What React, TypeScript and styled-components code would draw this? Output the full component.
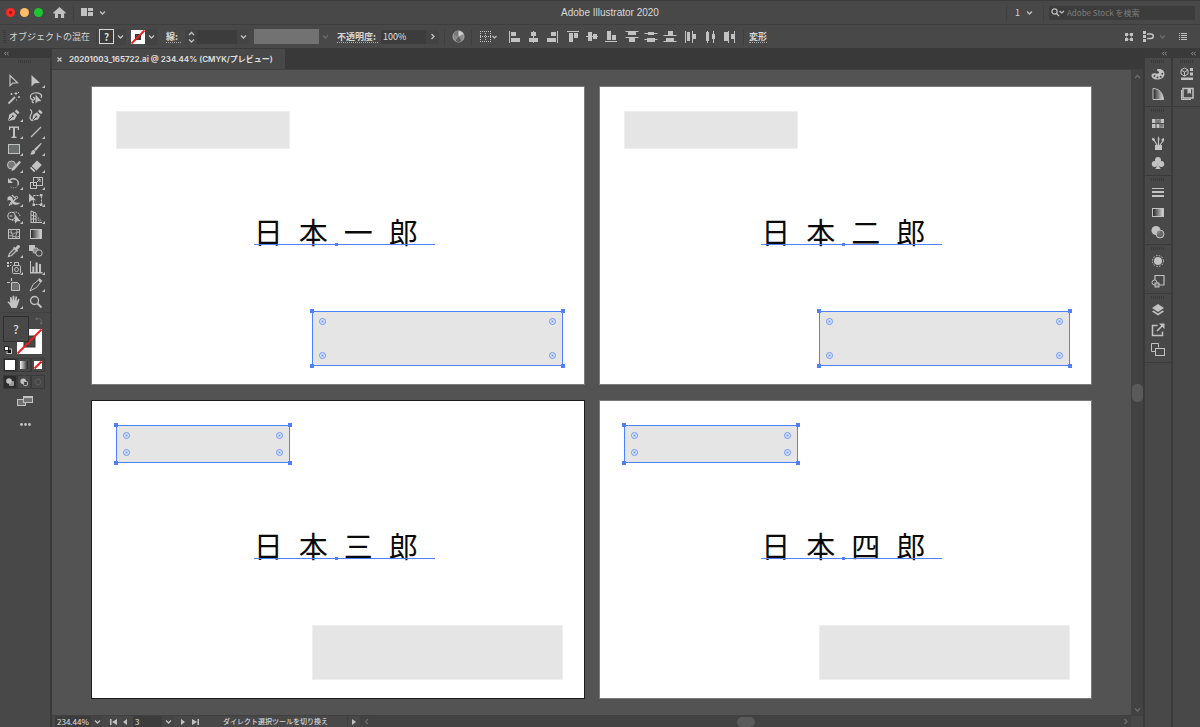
import React from "react";
import styled, { createGlobalStyle, css } from "styled-components";

const color = {
  panel: "#484848",
  edge: "#3a3a3a",
  tabs: "#393939",
  field: "#3c3c3c",
  track: "#424242",
  thumb: "#5a5a5a",
  canvas: "#535353",
  icon: "#c2c2c2",
  text: "#d6d6d6",
  select: "#4f80ff",
  block: "#e5e5e5",
};

const GlobalStyle = createGlobalStyle`
  *, *::before, *::after { box-sizing: border-box; }
  body {
    margin: 0;
    background: ${color.edge};
    color: ${color.text};
    font-family: "Noto Sans CJK JP", "Noto Sans", sans-serif;
    font-size: 9px;
    line-height: 12px;
  }
  button, input, select { font: inherit; color: inherit; }
`;

/* ---------- shared parts ---------- */

const Window = styled.div`
  display: flex;
  flex-direction: column;
  min-height: 100vh;
`;

const Svg = styled.svg`
  display: block;
  flex: none;
  fill: none;
  stroke: currentColor;
  overflow: visible;
`;

const IconButton = styled.button<{ $w?: number; $h?: number; $dim?: boolean; $framed?: boolean }>`
  display: flex;
  align-items: center;
  justify-content: center;
  flex: none;
  width: ${(p) => p.$w ?? 18}px;
  height: ${(p) => p.$h ?? 16}px;
  padding: 0;
  border: 0;
  background: ${(p) => (p.$framed ? "#434343" : "none")};
  color: ${(p) => (p.$dim ? "#6c6c6c" : color.icon)};
`;

const Divider = styled.span<{ $h?: number }>`
  flex: none;
  width: 1px;
  height: ${(p) => p.$h ?? 16}px;
  background: #3f3f3f;
`;

const Gap = styled.span<{ $w: number }>`
  flex: none;
  width: ${(p) => p.$w}px;
`;

const Field = styled.input<{ $w: number }>`
  flex: none;
  width: ${(p) => p.$w}px;
  height: 14px;
  padding: 0 2px;
  border: 0;
  border-radius: 0;
  background: ${color.field};
  color: #e0e0e0;
`;

const SelectBox = styled.span<{ $w: number; $h?: number }>`
  display: grid;
  grid-template-columns: 1fr 12px;
  align-items: center;
  justify-items: center;
  flex: none;
  width: ${(p) => p.$w}px;
  height: ${(p) => p.$h ?? 14}px;
  color: ${color.icon};
  select {
    grid-area: 1 / 1 / 2 / 3;
    width: 100%;
    height: 100%;
    padding: 0 2px;
    border: 0;
    border-radius: 0;
    appearance: none;
    color: #e0e0e0;
    background: linear-gradient(to left, #444 12px, ${color.field} 12px);
  }
  svg {
    grid-area: 1 / 2 / 2 / 3;
    pointer-events: none;
  }
`;

type Dir = "down" | "up" | "left" | "right";
const chevrons: Record<Dir, string> = {
  down: "M1 2.5 3.5 5 6 2.5",
  up: "M1 5 3.5 2.5 6 5",
  left: "M5 1 2.5 3.5 5 6",
  right: "M2.5 1 5 3.5 2.5 6",
};
const Chevron = ({ dir = "down" }: { dir?: Dir }) => (
  <Svg width="7" height="7" viewBox="0 0 7 7" strokeWidth="1.3">
    <path d={chevrons[dir]} />
  </Svg>
);

const Stepper = styled.span`
  display: flex;
  flex-direction: column;
  flex: none;
`;

/* ---------- title bar ---------- */

const TitleBar = styled.header`
  display: grid;
  grid-template-columns: 1fr auto 1fr;
  align-items: center;
  height: 25px;
  border-top: 1px solid #3a3a3a;
  border-bottom: 1px solid #3e3e3e;
  background: ${color.panel};
`;

const TitleSide = styled.div<{ $end?: boolean }>`
  display: flex;
  align-items: center;
  justify-content: ${(p) => (p.$end ? "flex-end" : "flex-start")};
  padding: 0 5px 0 6px;
`;

const Lights = styled.div`
  display: flex;
  gap: 5px;
  margin-right: 8px;
`;

const Light = styled.button<{ $c: string; $mark?: boolean }>`
  width: 9px;
  height: 9px;
  padding: 0;
  border: 0;
  border-radius: 50%;
  background: ${(p) => p.$c};
  ${(p) => p.$mark && css`background: radial-gradient(#a3120e 1px, ${p.$c} 2px);`}
`;

const Title = styled.h1`
  margin: 0;
  padding-left: 20px;
  font: 400 10px/14px "Liberation Sans", Arial, sans-serif;
  color: #d8d8d8;
`;

const Search = styled.label`
  display: flex;
  align-items: center;
  width: 146px;
  height: 14px;
  padding-left: 2px;
  background: ${color.field};
  color: ${color.icon};
  input {
    flex: 1;
    min-width: 0;
    height: 14px;
    padding: 0 0 0 2px;
    border: 0;
    background: none;
    outline: 0;
    font-size: 8px;
  }
  input::placeholder { color: #7c7c7c; }
`;

const TopBar = () => (
  <TitleBar>
    <TitleSide>
      <Lights>
        <Light $c="#fb2a22" $mark aria-label="Close" />
        <Light $c="#fdbc68" aria-label="Minimize" />
        <Light $c="#1fc431" aria-label="Zoom" />
      </Lights>
      <IconButton $w={17} aria-label="Home">
        <Svg width="13" height="11" viewBox="0 0 14 12">
          <path d="M7 0 14 6.3 13 7.3 12 6.5V12H8.6V7.6H5.4V12H2V6.5L1 7.3 0 6.3z" fill="currentColor" stroke="none" />
        </Svg>
      </IconButton>
      <Gap $w={5} />
      <Divider />
      <Gap $w={6} />
      <IconButton $w={14} aria-label="Workspace layout">
        <Svg width="13" height="9" viewBox="0 0 13 9">
          <path d="M0 0h6v8H0zM7 0h5v3H7zM7 4h5v4H7z" fill="currentColor" stroke="none" />
        </Svg>
      </IconButton>
      <IconButton $w={16} aria-label="Workspace menu"><Chevron /></IconButton>
    </TitleSide>
    <Title>Adobe Illustrator 2020</Title>
    <TitleSide $end>
      <Divider />
      <Gap $w={8} />
      <span>1</span>
      <IconButton $w={18} aria-label="Workspace"><Chevron /></IconButton>
      <Gap $w={5} />
      <Divider />
      <Gap $w={5} />
      <Search>
        <Svg width="14" height="9" viewBox="0 0 14 9" strokeWidth="1.2">
          <circle cx="3.5" cy="3.5" r="2.6" />
          <path d="M5.5 5.5 8 8M8.5 3 10.7 5 13 3" />
        </Svg>
        <input aria-label="Adobe Stock を検索" placeholder="Adobe Stock を検索" />
      </Search>
    </TitleSide>
  </TitleBar>
);

/* ---------- control bar ---------- */

const Bar = styled.div`
  display: flex;
  align-items: center;
  height: 24px;
  padding-left: 3px;
  border-bottom: 1px solid ${color.edge};
  background: ${color.panel};
`;

const BarGrip = styled.span`
  width: 3px;
  height: 14px;
  background: repeating-linear-gradient(#3b3b3b 0 1px, transparent 1px 2px);
`;

const BarLabel = styled.span<{ $w: number }>`
  flex: none;
  width: ${(p) => p.$w}px;
  white-space: nowrap;
`;

const LinkButton = styled.button<{ $w: number }>`
  flex: none;
  width: ${(p) => p.$w}px;
  height: 12px;
  padding: 0;
  border: 0;
  border-bottom: 1px dotted #a8a8a8;
  background: none;
  text-align: left;
  font-weight: 700;
  line-height: 11px;
  white-space: nowrap;
`;

const FillSwatch = styled.button`
  flex: none;
  width: 15px;
  height: 15px;
  padding: 0;
  border: 1px solid #d8d8d8;
  background: #3c3c3c;
  font-size: 10px;
  font-weight: 700;
  line-height: 12px;
`;

const DisabledBox = styled.span`
  flex: none;
  width: 65px;
  height: 15px;
  background: #727272;
`;

const ButtonGroup = styled.div`
  display: flex;
  margin-right: 2px;
`;

const Push = styled.span`
  flex: 1;
`;

const alignShapes: { name: string; line: string; solid: string }[][] = [
  [
    { name: "Align left", line: "M2.5 1v12", solid: "M4 2h5v4H4zM4 8h9v4H4z" },
    { name: "Align center", line: "M7.5 1v12", solid: "M5 2h5v4H5zM3 8h9v4H3z" },
    { name: "Align right", line: "M12.5 1v12", solid: "M6 2h5v4H6zM2 8h9v4H2z" },
  ],
  [
    { name: "Align top", line: "M1 1.5h12", solid: "M3 3h4v9H3zM8 3h4v5H8z" },
    { name: "Align middle", line: "M1 6.5h12", solid: "M3 2h4v9H3zM8 4h4v5H8z" },
    { name: "Align bottom", line: "M1 11.5h12", solid: "M3 1h4v9H3zM8 5h4v5H8z" },
  ],
  [
    { name: "Distribute top", line: "M.5 1.5h13M.5 7.5h13", solid: "M3 2h8v3H3zM4 8h6v4H4z" },
    { name: "Distribute vertical center", line: "M.5 3.5h13M.5 9.5h13", solid: "M4 2h6v3H4zM3 8h8v4H3z" },
    { name: "Distribute bottom", line: "M.5 5.5h13M.5 11.5h13", solid: "M5 1h5v4H5zM3 8h8v3H3z" },
  ],
  [
    { name: "Distribute left", line: "M1.5 1v12M8.5 1v12", solid: "M3 2h3v9H3zM9 4h3v5H9z" },
    { name: "Distribute horizontal center", line: "M4.5 1v12M10.5 1v12", solid: "M3 2h3v9H3zM9 4h3v5H9z" },
    { name: "Distribute right", line: "M6.5 1v12M12.5 1v12", solid: "M2 2h4v9H2zM9 4h3v5H9z" },
  ],
];

const StrokeNone = ({ size, hole }: { size: number; hole: number }) => (
  <Svg width={size} height={size} viewBox={`0 0 ${size} ${size}`}>
    <rect width={size} height={size} fill="#fff" stroke="none" />
    <rect x={(size - hole) / 2} y={(size - hole) / 2} width={hole} height={hole} fill={color.panel} stroke="#333" strokeWidth="1" />
    <path d={`M.5 ${size - 0.5}L${size - 0.5} .5`} stroke="#f01818" strokeWidth="1.8" />
  </Svg>
);

const ControlBar = () => (
  <Bar>
    <BarGrip />
    <Gap $w={3} />
    <BarLabel $w={87}>オブジェクトの混在</BarLabel>
    <Divider />
    <Gap $w={2} />
    <FillSwatch aria-label="Fill">?</FillSwatch>
    <IconButton $w={12} $framed aria-label="Fill menu"><Chevron /></IconButton>
    <Gap $w={5} />
    <IconButton $w={14} aria-label="Stroke"><StrokeNone size={14} hole={5} /></IconButton>
    <IconButton $w={12} $framed aria-label="Stroke menu"><Chevron /></IconButton>
    <Gap $w={9} />
    <LinkButton $w={15}>線:</LinkButton>
    <Gap $w={4} />
    <Stepper>
      <IconButton $w={12} $h={7} $framed aria-label="Increase"><Chevron dir="up" /></IconButton>
      <IconButton $w={12} $h={7} $framed aria-label="Decrease"><Chevron /></IconButton>
    </Stepper>
    <SelectBox $w={52}>
      <select aria-label="線幅"><option></option></select>
      <Chevron />
    </SelectBox>
    <Gap $w={5} />
    <DisabledBox />
    <IconButton $w={12} $dim disabled aria-label="Profile"><Chevron /></IconButton>
    <Gap $w={6} />
    <LinkButton $w={41}>不透明度:</LinkButton>
    <Gap $w={3} />
    <Field $w={45} aria-label="不透明度" defaultValue="100%" />
    <IconButton $w={13} $h={14} $framed aria-label="Opacity slider"><Chevron dir="right" /></IconButton>
    <Gap $w={5} />
    <Divider />
    <IconButton $w={26} aria-label="Recolor artwork">
      <Svg width="13" height="13" viewBox="0 0 13 13">
        <circle cx="6.5" cy="6.5" r="5.5" fill="#8a8a8a" stroke="#b0b0b0" />
        <path d="M6.5 6.5V1a5.5 5.5 0 0 0-5 3.5z" fill="#777" stroke="none" />
        <path d="M6.5 6.5l5-2.5a5.5 5.5 0 0 0-5-3z" fill="#cfcfcf" stroke="none" />
        <path d="M6.5 6.5l-3 4.5a5.5 5.5 0 0 0 6 0z" fill="#5c5c5c" stroke="none" />
      </Svg>
    </IconButton>
    <Divider />
    <IconButton $w={33} aria-label="Align to selection">
      <Svg width="17" height="12" viewBox="0 0 17 12">
        <path d="M0 .5h11M0 5.5h11M0 10.5h11" strokeDasharray="1 1" />
        <path d="M.5 2v8M5.5 2v8M10.5 2v8" strokeDasharray="1 1" />
        <path d="M12.5 5l2 2 2-2" strokeWidth="1.2" />
      </Svg>
    </IconButton>
    {alignShapes.map((group) => (
      <ButtonGroup key={group[0].name}>
        {group.map((shape) => (
          <IconButton $w={19} key={shape.name} aria-label={shape.name}>
            <Svg width="15" height="14" viewBox="0 0 15 14">
              <path d={shape.line} />
              <path d={shape.solid} fill="currentColor" stroke="none" />
            </Svg>
          </IconButton>
        ))}
      </ButtonGroup>
    ))}
    <Gap $w={2} />
    <Divider />
    <Gap $w={5} />
    <LinkButton $w={18}>変形</LinkButton>
    <Push />
    <IconButton $w={18} aria-label="Edit similar shapes">
      <Svg width="10" height="10" viewBox="0 0 10 10">
        <path d="M1 1h3v3H1zM6 1h3v3H6zM1 6h3v3H1zM6 6h3v3H6z" fill="currentColor" stroke="none" />
        <path d="M4.5 2.5h1M4.5 7.5h1M2.5 4.5v1M7.5 4.5v1" />
      </Svg>
    </IconButton>
    <IconButton $w={20} aria-label="Snap options">
      <Svg width="11" height="11" viewBox="0 0 11 11">
        <path d="M0 0h3v3H0zM0 4h3v3H0zM0 8h3v3H0z" fill="currentColor" stroke="none" />
        <path d="M4 3h4a2.2 2.2 0 0 1 0 4.5H4" strokeWidth="1.5" />
      </Svg>
    </IconButton>
    <IconButton $w={8} $dim aria-label="Snap menu"><Chevron /></IconButton>
    <Gap $w={7} />
    <IconButton $w={20} aria-label="Panel menu">
      <Svg width="8" height="8" viewBox="0 0 8 8">
        <path d="M0 .5h1M2 .5h6M0 2.5h1M2 2.5h6M0 4.5h1M2 4.5h6M0 6.5h1M2 6.5h6" />
      </Svg>
    </IconButton>
    <Gap $w={7} />
  </Bar>
);

/* ---------- tool panel ---------- */

const Body = styled.div`
  display: flex;
  flex: 1;
  gap: 2px;
`;

const SidePanel = styled.aside<{ $w: number }>`
  display: flex;
  flex-direction: column;
  flex: none;
  width: ${(p) => p.$w}px;
  background: ${color.panel};
`;

const CollapseStrip = styled.button<{ $end?: boolean }>`
  display: flex;
  align-items: center;
  justify-content: ${(p) => (p.$end ? "flex-end" : "flex-start")};
  height: 9px;
  padding: 0 4px;
  border: 0;
  background: ${color.edge};
  color: #a0a0a0;
`;

const Collapse = ({ end }: { end?: boolean }) => (
  <CollapseStrip $end={end} aria-label="Collapse panel">
    <Svg width="5" height="5" viewBox="0 0 6 5">
      <path d="M2.5.5.5 2.5l2 2M5.5.5l-2 2 2 2" />
    </Svg>
  </CollapseStrip>
);

const Grip = styled.span`
  align-self: center;
  width: 14px;
  height: 3px;
  margin: 2px 0 1px;
  background: repeating-linear-gradient(to right, #3a3a3a 0 1px, transparent 1px 2px);
`;

const ToolGrid = styled.div`
  display: grid;
  grid-template-columns: repeat(2, 22px);
  grid-auto-rows: 17px;
  margin: 9px 0 1px 3px;
`;

const s = { fill: "currentColor", stroke: "none" };
const dark = { stroke: color.panel, strokeWidth: 1 };

const tools: { name: string; more?: boolean; art: React.ReactNode }[] = [
  { name: "Selection", art: <path d="M3 1.5v10.2l2.8-2.6 4.700-.3z" strokeWidth="1.2" /> },
  { name: "Direct selection", more: true, art: <path d="M2.5 1v11.5l3.3-3.2 5.2-.3z" {...s} /> },
  {
    name: "Magic wand",
    art: (
      <>
        <path d="M1.5 12.5 8 6" strokeWidth="1.8" />
        <path d="M9 1v3M7.5 2.5h3M12 5v2M11 6h2M4.5 2v2M3.5 3h2M11.5 1v1M9.5 8.5v1" />
      </>
    ),
  },
  {
    name: "Lasso",
    art: (
      <>
        <path d="M4.5 9C.5 8.5 0 3 5.5 2c5-1 8.5 2 6.5 5M4.5 9C2 10 3.5 12 5 11.5M4.5 9c2-1 1-3-.5-2.5" strokeWidth="1.2" />
        <path d="M6.5 3.5v9l2.3-2.3h3.7z" {...s} />
      </>
    ),
  },
  {
    name: "Pen",
    more: true,
    art: (
      <>
        <path d="M1 13l1.3-6.5L6.7 4 10 7.3 7.5 11.7z" {...s} />
        <path d="M7.8 3.2 9.5 1.5 12.5 4.5 10.8 6.2z" {...s} />
        <path d="M1.5 12.5 5.5 8.5" {...dark} />
        <circle cx="5.8" cy="8.2" r="1" fill={color.panel} stroke="none" />
      </>
    ),
  },
  {
    name: "Curvature",
    art: (
      <>
        <path d="M3 12.8l1.3-6L8 4.3l3.3 3.3L9 11.5z" {...s} />
        <path d="M9 3.4 10.7 1.5 13.6 4.4 12 6.3z" {...s} />
        <path d="M1 1.5c3 1.5 1.5 4 .5 6s-.5 4 2 5.5" strokeWidth="1.2" />
        <path d="M4 12 7 9" {...dark} />
        <circle cx="7.3" cy="8.5" r="1" fill={color.panel} stroke="none" />
      </>
    ),
  },
  { name: "Type", more: true, art: <path d="M2 1.5h10V5h-1.2L10.5 3H8v8.5l1.5.3V13h-5v-1.2L6 11.5V3H3.5L3.2 5H2z" {...s} /> },
  { name: "Line segment", more: true, art: <path d="M2 12 12 2" strokeWidth="1.2" /> },
  { name: "Rectangle", more: true, art: <rect x="1.5" y="2.5" width="11" height="9" fill="#6a6e6d" /> },
  {
    name: "Paintbrush",
    more: true,
    art: (
      <>
        <path d="M12.8 1.5 6.8 9 5 7.3 11.8 1z" {...s} />
        <path d="M4.3 8c1.5 0 2.5 1.3 1.7 3-.8 1.5-3 1.8-5 1.3 1.5-.8 1.3-3.8 3.3-4.3z" {...s} />
      </>
    ),
  },
  {
    name: "Shaper",
    more: true,
    art: (
      <>
        <circle cx="4.5" cy="6" r="4" fill="#777" />
        <path d="M14 3.3 7.5 10.8 4.5 12.3l.8-3.3L12.3 1.8z" {...s} />
      </>
    ),
  },
  {
    name: "Eraser",
    more: true,
    art: (
      <>
        <path d="M8 1.5 12.8 6 7.5 11.5 2.7 7z" {...s} />
        <path d="M2 7.8 6.5 12l-1.5 1L1 9z" fill="#fff" stroke="none" opacity=".75" />
      </>
    ),
  },
  {
    name: "Rotate",
    more: true,
    art: (
      <>
        <path d="M3 4C7 1 12.5 4 11 9" strokeWidth="1.4" />
        <path d="M11 9c-1 3-5 4-8 1.5" strokeDasharray="1.5 1" opacity=".6" />
        <path d="M1 2v5h5z" {...s} />
      </>
    ),
  },
  {
    name: "Scale",
    more: true,
    art: (
      <>
        <rect x="4.5" y="1.5" width="9" height="8" />
        <rect x="1.5" y="6.5" width="6" height="6" />
        <path d="M7 7l4-4M8 3h3v3" />
      </>
    ),
  },
  {
    name: "Width",
    more: true,
    art: (
      <>
        <path d="M.5 4.5c3-3 5 0 5.500 2s3 4 7.5 3c-2 3-7 3-8.5.5S3 6 .5 7.5z" {...s} />
        <path d="M2 12.5 9 5.5M5 2l3 3M3 9.5l2 2" strokeWidth="1.2" />
        <circle cx="9.5" cy="4.5" r="1.2" />
      </>
    ),
  },
  {
    name: "Free transform",
    more: true,
    art: (
      <>
        <path d="M4.5 2.5h8v9h-8z" strokeDasharray="2 1" />
        <path d="M11 1h2.5v2.5H11zM11 10.5h2.5V13H11zM3.5 10.5H6V13H3.5z" {...s} />
        <path d="M0 .5v9l2.5-2.3H7z" {...s} />
      </>
    ),
  },
  {
    name: "Shape builder",
    more: true,
    art: (
      <>
        <circle cx="4.5" cy="6" r="3.8" />
        <path d="M6 2.5c4-1.5 7.5 1 7 4.5M5 10c1 .6 1.5.8 3 .8" strokeDasharray="1.5 1" />
        <path d="M2.5 6h3" />
        <path d="M8 4.5v9l2.2-2.2h3.5z" {...s} />
      </>
    ),
  },
  {
    name: "Perspective grid",
    more: true,
    art: (
      <>
        <path d="M2 1v12M2 1l5 2v10M2 5l5 1.5M2 9h5M4.5 2v11M2 12.5h11" />
        <path d="M7 4l6 8M7 7l4.5 5M9.5 8v4M7 10h5" opacity=".6" strokeDasharray="1 1" />
      </>
    ),
  },
  {
    name: "Mesh",
    art: (
      <>
        <rect x="1.5" y="2.5" width="11" height="9" />
        <path d="M1.5 6c3-3 4 2 6 .5s3-2 5-1M1.5 9.5c3-3 7 3 11-.5M5 2.5c-3 3 3 6 0 9M9 2.5c3 3-2 6 .5 9" opacity=".85" />
      </>
    ),
  },
  { name: "Gradient", art: <rect x="1.5" y="2.5" width="11" height="9" fill="url(#fade)" /> },
  {
    name: "Eyedropper",
    more: true,
    art: (
      <>
        <path d="M7.5 4.5 2.5 9.5 1.5 12.5 4.5 11.5 9.5 6.5" strokeWidth="1.2" />
        <path d="M6 4l1.2-1.2 1 1L10.5 1.3c1.5-1 3 .6 2.2 2.2L10.2 5.8l1 1L10 8z" {...s} />
      </>
    ),
  },
  {
    name: "Blend",
    art: (
      <>
        <path d="M0 1h6v6H0z" {...s} />
        <rect x="4" y="4" width="5" height="5" rx="1.5" fill="#8a8a8a" />
        <circle cx="10" cy="9" r="3.2" fill={color.panel} />
      </>
    ),
  },
  {
    name: "Symbol sprayer",
    more: true,
    art: (
      <>
        <rect x="5.5" y="4.5" width="8" height="8" rx="1" />
        <path d="M7.5 4.5v-3h4v3" />
        <circle cx="9.5" cy="8.5" r="2" />
        <path d="M0 1h2v2H0zM3 1h2v1H3zM0 4h2v2H0zM3 4h1v1H3z" {...s} />
      </>
    ),
  },
  { name: "Column graph", more: true, art: <path d="M1 0v12.5h12.5V11H12V3h-2v8H8.7V1.5H6.5V11H5.3V5.5H3.3V11H2V0z" {...s} /> },
  {
    name: "Artboard",
    art: (
      <>
        <path d="M4.5 4.5h6l2 2v6h-8z" fill="#707070" />
        <path d="M4.5 0v3M0 4.5h3" strokeWidth="1.2" />
      </>
    ),
  },
  {
    name: "Slice",
    more: true,
    art: (
      <>
        <path d="M1 13 4 6.5 9.5 2l2 2.3L7.5 9.5z" />
        <path d="M9 1.5 10.5 0l3 3-1.8 1.7z" {...s} />
      </>
    ),
  },
  {
    name: "Hand",
    more: true,
    art: <path d="M4.5 13 2.5 9.5.5 7.2c.6-1 1.6-.7 2.7.5L3 2.5c.8-.8 1.5-.5 1.7.3L5.3 6l.3-5c.6-.8 1.4-.7 1.7 0L7.5 6l1-4.3c.7-.6 1.4-.4 1.5.4L9.7 6.5l1.6-2.7c.8-.3 1.3.1 1.2.8L11 9.500 9.5 13z" {...s} />,
  },
  {
    name: "Zoom",
    art: (
      <>
        <circle cx="5.5" cy="5.5" r="4" strokeWidth="1.3" />
        <path d="M8.5 8.5 12.5 12.5" strokeWidth="2" />
      </>
    ),
  },
];

const Tool = ({ name, more, art }: (typeof tools)[number]) => (
  <IconButton $w={22} $h={17} aria-label={name}>
    <Svg width="22" height="17" viewBox="0 0 22 17">
      <g transform="translate(4 1)">{art}</g>
      {more && <path d="M20 12v3h-3z" {...s} />}
    </Svg>
  </IconButton>
);

const FillStroke = styled.div`
  position: relative;
  height: 43px;
  border-top: 1px solid #414141;
`;

const FillProxy = styled.button`
  position: absolute;
  left: 3px;
  top: 3px;
  width: 26px;
  height: 26px;
  padding: 0;
  border: 1px solid #303030;
  background: ${color.panel};
  font-size: 12px;
  font-weight: 500;
`;

const StrokeProxy = styled.button`
  position: absolute;
  left: 17px;
  top: 16px;
  padding: 0;
  border: 0;
  background: none;
`;

const SwapMark = styled.button`
  position: absolute;
  left: 35px;
  top: 4px;
  padding: 0;
  border: 0;
  background: none;
  color: #6c6c6c;
`;

const DefaultMark = styled.button`
  position: absolute;
  left: 4px;
  top: 33px;
  padding: 0;
  border: 0;
  background: none;
  color: ${color.icon};
`;

const ModeRow = styled.div`
  display: flex;
  align-self: flex-start;
  margin: 3px 0 0 3px;
`;

const Mode = styled.button<{ $active?: boolean }>`
  display: flex;
  align-items: center;
  justify-content: center;
  width: 14px;
  height: 14px;
  padding: 0;
  border: 1px solid #3a3a3a;
  background: ${(p) => (p.$active ? "#2c2c2c" : color.panel)};
  color: ${color.icon};
`;

const PanelFoot = styled.div`
  display: flex;
  flex-direction: column;
  align-items: center;
  gap: 7px;
  margin-top: 4px;
`;

const ToolPanel = () => (
  <SidePanel $w={50}>
    <Collapse />
    <Grip />
    <ToolGrid>
      {tools.map((t) => (
        <Tool key={t.name} {...t} />
      ))}
    </ToolGrid>
    <FillStroke>
      <StrokeProxy aria-label="Stroke"><StrokeNone size={25} hole={11} /></StrokeProxy>
      <FillProxy aria-label="Fill">?</FillProxy>
      <SwapMark aria-label="Swap fill and stroke">
        <Svg width="8" height="8" viewBox="0 0 9 9">
          <path d="M2 2h2.5C6 2 7 3 7 4.5V7" />
          <path d="M0 2l2.5-2v4zM7 9 5 6.5h4z" {...s} />
        </Svg>
      </SwapMark>
      <DefaultMark aria-label="Default fill and stroke">
        <Svg width="8" height="8" viewBox="0 0 8 8">
          <rect x="3" y="3" width="4.5" height="4.5" fill="#111" />
          <rect x=".5" y=".5" width="4" height="4" fill="#fff" stroke="#222" />
        </Svg>
      </DefaultMark>
    </FillStroke>
    <ModeRow>
      <Mode $active aria-label="Color">
        <Svg width="10" height="10" viewBox="0 0 10 10"><rect width="10" height="10" fill="#fff" stroke="none" /></Svg>
      </Mode>
      <Mode aria-label="Gradient">
        <Svg width="8" height="8" viewBox="0 0 8 8"><rect width="8" height="8" fill="url(#fadeRight)" stroke="none" /></Svg>
      </Mode>
      <Mode aria-label="None">
        <Svg width="8" height="8" viewBox="0 0 8 8">
          <rect width="8" height="8" fill="#fff" stroke="none" />
          <path d="M.5 7.5l7-7" stroke="#f01818" strokeWidth="2" />
        </Svg>
      </Mode>
    </ModeRow>
    <ModeRow>
      <Mode $active aria-label="Draw normal">
        <Svg width="8" height="8" viewBox="0 0 8 8">
          <rect x="3" y="3" width="5" height="5" rx="1" fill="#9a9a9a" stroke="none" />
          <circle cx="3" cy="3" r="2.8" {...s} />
        </Svg>
      </Mode>
      <Mode aria-label="Draw behind">
        <Svg width="8" height="8" viewBox="0 0 8 8">
          <circle cx="3.2" cy="3.2" r="2.8" {...s} />
          <rect x="3.5" y="3.5" width="4" height="4" rx="1" fill={color.panel} />
        </Svg>
      </Mode>
      <Mode aria-label="Draw inside" disabled>
        <Svg width="8" height="8" viewBox="0 0 8 8"><circle cx="4" cy="4" r="2.8" stroke="#5c5c5c" /></Svg>
      </Mode>
    </ModeRow>
    <PanelFoot>
      <IconButton aria-label="Screen mode">
        <Svg width="16" height="12" viewBox="0 0 16 12">
          <rect x=".5" y="4.5" width="8" height="6" fill="#707070" />
          <rect x="6.5" y="1.5" width="9" height="6" fill="#707070" />
          <path d="M6 2h10" strokeWidth="2" />
        </Svg>
      </IconButton>
      <IconButton aria-label="Edit toolbar">
        <Svg width="11" height="3" viewBox="0 0 11 3">
          <circle cx="1.5" cy="1.5" r="1.4" {...s} />
          <circle cx="5.5" cy="1.5" r="1.4" {...s} />
          <circle cx="9.5" cy="1.5" r="1.4" {...s} />
        </Svg>
      </IconButton>
    </PanelFoot>
  </SidePanel>
);

/* ---------- document ---------- */

const Document = styled.main`
  display: flex;
  flex-direction: column;
  flex: 1;
  min-width: 0;
`;

const TabStrip = styled.div`
  display: flex;
  height: 21px;
  background: ${color.tabs};
  border-bottom: 1px solid #404040;
`;

const Tab = styled.div`
  display: flex;
  align-items: center;
  gap: 4px;
  height: 20px;
  padding: 0 12px 0 2px;
  background: ${color.panel};
  color: #e0e0e0;
  font-family: Inter, "Noto Sans CJK JP", sans-serif;
  font-size: 8px;
  font-weight: 600;
  white-space: nowrap;
`;

const View = styled.div`
  display: flex;
  flex: 1;
`;

const Canvas = styled.div`
  display: grid;
  grid-template-columns: 1fr 1fr;
  grid-auto-rows: 1fr;
  gap: 17px 16px;
  flex: 1;
  min-width: 0;
  padding: 17px 40px;
  background: ${color.canvas};
`;

const Artboard = styled.section<{ $active?: boolean }>`
  display: flex;
  flex-direction: column;
  justify-content: space-between;
  align-items: flex-start;
  min-height: 297px;
  padding: 24px 21px 18px 24px;
  background: #fff;
  outline: 1px solid ${(p) => (p.$active ? "#1c1c1c" : "#7a7a7a")};
`;

const Block = styled.div<{ $large?: boolean; $selected?: boolean }>`
  position: relative;
  width: ${(p) => (p.$large ? 251 : 174)}px;
  height: ${(p) => (p.$large ? 55 : 38)}px;
  align-self: ${(p) => (p.$large ? "flex-end" : "flex-start")};
  background: ${color.block};
  border: 1px solid ${(p) => (p.$selected ? color.select : "#efefef")};
`;

const Handle = styled.span<{ $x: "left" | "right"; $y: "top" | "bottom" }>`
  position: absolute;
  ${(p) => p.$x}: -3px;
  ${(p) => p.$y}: -3px;
  width: 4px;
  height: 4px;
  background: ${color.select};
`;

const CornerWidget = styled.span<{ $x: "left" | "right"; $y: "top" | "bottom" }>`
  position: absolute;
  ${(p) => p.$x}: 6px;
  ${(p) => p.$y}: 6px;
  width: 7px;
  height: 7px;
  border: 1px solid #6c95fb;
  border-radius: 50%;
  background: radial-gradient(#7b9ef8 0, #dfe6f8 2px);
`;

const corners = [
  ["left", "top"],
  ["right", "top"],
  ["left", "bottom"],
  ["right", "bottom"],
] as const;

const Shape = ({ large, selected }: { large?: boolean; selected?: boolean }) => (
  <Block $large={large} $selected={selected}>
    {selected &&
      corners.map(([x, y]) => (
        <React.Fragment key={x + y}>
          <Handle $x={x} $y={y} />
          <CornerWidget $x={x} $y={y} />
        </React.Fragment>
      ))}
  </Block>
);

const Name = styled.p`
  position: relative;
  display: flex;
  align-self: center;
  gap: 16px;
  width: 181px;
  height: 30px;
  margin: 0 0 0 10px;
  color: #0a0a0a;
  font-size: 29px;
  line-height: 32px;
`;

const Baseline = styled.span`
  position: absolute;
  left: 0;
  right: 0;
  bottom: 0;
  height: 1px;
  background: ${color.select};
  &::after {
    content: "";
    position: absolute;
    left: 81px;
    top: -1px;
    width: 3px;
    height: 3px;
    background: ${color.select};
  }
`;

const boards = [
  { name: "日本一郎", pick: "large" },
  { name: "日本二郎", pick: "large" },
  { name: "日本三郎", pick: "small", active: true },
  { name: "日本四郎", pick: "small" },
];

const VScroll = styled.div`
  display: flex;
  flex-direction: column;
  align-items: center;
  justify-content: space-between;
  flex: none;
  width: 12px;
  padding: 2px 0;
  background: ${color.track};
`;

const Thumb = styled.span<{ $wide?: boolean }>`
  width: ${(p) => (p.$wide ? 18 : 11)}px;
  height: ${(p) => (p.$wide ? 10 : 18)}px;
  border-radius: 5px;
  background: ${color.thumb};
`;

const StatusBar = styled.footer`
  display: flex;
  align-items: center;
  height: 12px;
  padding-left: 3px;
  border-top: 1px solid #404040;
  background: ${color.panel};
  font-size: 8px;
  line-height: 11px;
`;

const StatusText = styled.span`
  width: 129px;
  padding-left: 8px;
  font-size: 7px;
  font-weight: 500;
  white-space: nowrap;
`;

const HScroll = styled.div`
  display: flex;
  align-items: center;
  justify-content: space-between;
  flex: 1;
  height: 11px;
  margin-right: 12px;
  background: ${color.track};
`;

const NavMark = ({ d, w = 7 }: { d: string; w?: number }) => (
  <Svg width={w} height="6" viewBox={`0 0 ${w} 6`}>
    <path d={d} {...s} />
  </Svg>
);

const DocumentArea = () => (
  <Document>
    <TabStrip>
      <Tab>
        <IconButton $w={11} aria-label="Close document">
          <Svg width="5" height="5" viewBox="0 0 5 5" strokeWidth="1.3"><path d="M.5.5l4 4M4.5.5l-4 4" /></Svg>
        </IconButton>
        20201003_165722.ai @ 234.44% (CMYK/プレビュー)
      </Tab>
    </TabStrip>
    <View>
      <Canvas>
        {boards.map((b) => (
          <Artboard key={b.name} $active={b.active}>
            <Shape selected={b.pick === "small"} />
            <Name>
              {[...b.name].map((ch) => (
                <span key={ch}>{ch}</span>
              ))}
              <Baseline />
            </Name>
            <Shape large selected={b.pick === "large"} />
          </Artboard>
        ))}
      </Canvas>
      <VScroll>
        <IconButton $w={12} $h={8} $dim aria-label="Scroll up"><Chevron dir="up" /></IconButton>
        <Thumb />
        <IconButton $w={12} $h={8} $dim aria-label="Scroll down"><Chevron /></IconButton>
      </VScroll>
    </View>
    <StatusBar>
      <SelectBox $w={48} $h={11}>
        <select aria-label="Zoom level"><option>234.44%</option></select>
        <Chevron />
      </SelectBox>
      <Gap $w={4} />
      <IconButton $w={12} $h={11} aria-label="First artboard"><NavMark d="M0 0h1.5v6H0zM7 0v6L2 3z" /></IconButton>
      <IconButton $w={12} $h={11} aria-label="Previous artboard"><NavMark d="M5 0v6L1 3z" w={6} /></IconButton>
      <Gap $w={2} />
      <SelectBox $w={41} $h={11}>
        <select aria-label="Artboard"><option>3</option></select>
        <Chevron />
      </SelectBox>
      <Gap $w={3} />
      <IconButton $w={12} $h={11} aria-label="Next artboard"><NavMark d="M1 0v6l4-3z" w={6} /></IconButton>
      <IconButton $w={12} $h={11} aria-label="Last artboard"><NavMark d="M5.5 0H7v6H5.5zM0 0v6l5-3z" /></IconButton>
      <Gap $w={14} />
      <StatusText>ダイレクト選択ツールを切り換え</StatusText>
      <Gap $w={3} />
      <Divider $h={11} />
      <IconButton $w={12} $h={11} aria-label="Status menu"><NavMark d="M1 0v6l4-3z" w={6} /></IconButton>
      <HScroll>
        <IconButton $w={12} $h={11} $dim aria-label="Scroll left"><Chevron dir="left" /></IconButton>
        <Thumb $wide />
        <IconButton $w={12} $h={11} $dim aria-label="Scroll right"><Chevron dir="right" /></IconButton>
      </HScroll>
    </StatusBar>
  </Document>
);

/* ---------- panel docks ---------- */

const DockSection = styled.div`
  display: flex;
  flex-direction: column;
  align-items: center;
  padding-bottom: 2px;
  border-bottom: 1px solid ${color.edge};
`;

type DockItem = { name: string; art: React.ReactNode };

const mainDock: DockItem[][] = [
  [
    {
      name: "Color",
      art: (
        <>
          <path d="M7.5 2C11 1.5 13.5 4 13.5 7s-3 5.5-7 5.5S.5 10.5.5 8.5 3 6 5 6.5s3.500-.5 3-1.5-1.500-.5-2-1.5.5-1.5 1.5-1.5z" {...s} />
          <g fill={color.panel} stroke="none">
            <circle cx="3.5" cy="9" r="1" />
            <circle cx="6.5" cy="10.5" r="1" />
            <circle cx="9.7" cy="9.7" r="1" />
            <circle cx="11.3" cy="6.8" r="1" />
          </g>
        </>
      ),
    },
    { name: "Color guide", art: <path d="M2 1.5C8 1.5 12 6 12.5 12.5H2z" fill="url(#fade)" /> },
  ],
  [
    {
      name: "Swatches",
      art: (
        <>
          <path d="M1 3h12v9H1z" {...s} />
          <path d="M5 3v9M9 3v9M1 7.5h12" {...dark} />
          <path d="M5.5 3.5h3v3.5h-3zM9.5 8h3v3.5h-3z" fill="#777" stroke="none" />
        </>
      ),
    },
    {
      name: "Brushes",
      art: (
        <>
          <path d="M4 9h7v5H4z" {...s} />
          <path d="M6 9 3 4M7.5 9V3M9 9l3-4" strokeWidth="1.2" />
          <path d="M3.5 5.5 1 4l.5-2.5L4 3zM6.5 3.5 7.5 0l1.2 3.5zM11 6l-.5-3L13 2v3z" {...s} />
        </>
      ),
    },
    {
      name: "Symbols",
      art: (
        <g {...s}>
          <circle cx="7" cy="4" r="3" />
          <circle cx="3.7" cy="8" r="2.9" />
          <circle cx="10.3" cy="8" r="2.9" />
          <path d="M6.3 6h1.4l.3 4.5 1.8 2.5H4.2L6 10.5z" />
        </g>
      ),
    },
  ],
  [
    { name: "Stroke", art: <path d="M1 3h12v1H1zM1 6h12v2H1zM1 10h12v2H1z" {...s} /> },
    { name: "Gradient", art: <rect x="1.5" y="3.5" width="11" height="8" fill="url(#fade)" /> },
    {
      name: "Transparency",
      art: (
        <>
          <circle cx="5" cy="5.5" r="4.5" {...s} />
          <circle cx="9" cy="9" r="4" fill="#707070" fillOpacity=".8" />
        </>
      ),
    },
  ],
  [
    {
      name: "Appearance",
      art: (
        <>
          <circle cx="7" cy="7" r="4" {...s} />
          <circle cx="7" cy="7" r="5.5" strokeDasharray="1.5 1.4" />
        </>
      ),
    },
    {
      name: "Graphic styles",
      art: (
        <>
          <path d="M4 6V1.5h9V11H8" strokeWidth="1.2" />
          <circle cx="3.5" cy="8.5" r="2.5" />
          <rect x="4" y="9" width="4" height="4" fill="#777" />
        </>
      ),
    },
  ],
  [
    {
      name: "Layers",
      art: (
        <>
          <path d="M7 1l6 4-6 4-6-4z" {...s} />
          <path d="M1 8.5 2.5 7.5 7 10.5 11.5 7.5 13 8.5l-6 4z" {...s} />
        </>
      ),
    },
    {
      name: "Asset export",
      art: (
        <>
          <path d="M6.5 2.5h-5v10h10v-4" strokeWidth="1.5" />
          <path d="M6 8l6-6" strokeWidth="1.6" />
          <path d="M8 .5h5.5V6z" {...s} />
        </>
      ),
    },
    {
      name: "Artboards",
      art: (
        <>
          <path d="M4 8.5H.5v-8h7v4" />
          <rect x="4.5" y="5.5" width="9" height="7" />
        </>
      ),
    },
  ],
];

const sideDock: DockItem[][] = [
  [
    {
      name: "Properties",
      art: (
        <>
          <path d="M4.5 1l3.5 2v4l-3.5 2L1 7V3zM1 3l3.5 2L8 3M4.5 5v4" />
          <path d="M10 1h3v3h-3zM10 5.5h3v3h-3zM1 10.5h12v2.5H1z" {...s} />
        </>
      ),
    },
    {
      name: "Libraries",
      art: (
        <>
          <rect x="3" y="1.5" width="10" height="9.5" strokeWidth="1.5" />
          <path d="M1.5 3v9.5H11" />
          <path d="M7.5 2h3.5v5L9.3 5.7 7.5 7z" {...s} />
        </>
      ),
    },
  ],
];

const Dock = ({ sections, width }: { sections: DockItem[][]; width: number }) => (
  <SidePanel $w={width}>
    <Collapse end />
    {sections.map((items) => (
      <DockSection key={items[0].name}>
        <Grip />
        {items.map((item) => (
          <IconButton key={item.name} $w={26} $h={20} aria-label={item.name}>
            <Svg width="14" height="14" viewBox="0 0 14 14">{item.art}</Svg>
          </IconButton>
        ))}
      </DockSection>
    ))}
  </SidePanel>
);

const Gradients = styled.svg`
  position: absolute;
  width: 0;
  height: 0;
`;

export default function App() {
  return (
    <Window>
      <GlobalStyle />
      <Gradients aria-hidden="true">
        <defs>
          <linearGradient id="fade">
            <stop offset="0" stopColor="#222" />
            <stop offset="1" stopColor="#ddd" />
          </linearGradient>
          <linearGradient id="fadeRight">
            <stop offset="0" stopColor="#f4f4f4" />
            <stop offset="1" stopColor="#222" />
          </linearGradient>
        </defs>
      </Gradients>
      <TopBar />
      <ControlBar />
      <Body>
        <ToolPanel />
        <DocumentArea />
        <Dock sections={mainDock} width={26} />
        <Dock sections={sideDock} width={27} />
      </Body>
    </Window>
  );
}
